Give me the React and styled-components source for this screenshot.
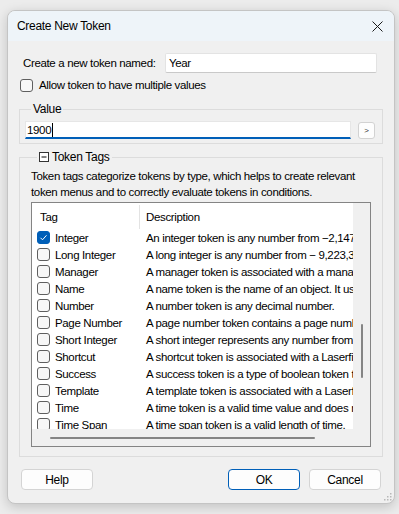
import React from "react";
import styled, { createGlobalStyle } from "styled-components";

const FONT = `"Liberation Sans", Arial, sans-serif`;

const Global = createGlobalStyle`
  html, body { margin: 0; padding: 0; }
  body {
    background: #ececec;
    font-family: ${FONT};
    font-size: 11.5px;
    letter-spacing: -0.35px;
    color: #000;
  }
  * { box-sizing: border-box; }
`;

const Page = styled.div`
  width: 399px;
  height: 514px;
  padding: 10px 0 0 7px;
`;

const Window = styled.div`
  width: 388px;
  height: 494px;
  background: #f0f0f0;
  border: 1px solid #c4c4c4;
  border-radius: 8px;
  box-shadow: 0 3px 12px rgba(0, 0, 0, 0.18);
  overflow: hidden;
  display: flex;
  flex-direction: column;
  position: relative;
`;

const TitleBar = styled.div`
  height: 30px;
  flex: none;
  background: #eef4f9;
  display: flex;
  align-items: center;
  justify-content: space-between;
  padding: 0 9px 0 9px;
  font-size: 12px;
  letter-spacing: -0.3px;
`;

const CloseBtn = styled.div`
  width: 14px;
  height: 14px;
  display: flex;
  align-items: center;
  justify-content: center;
  margin-right: 1px;
`;

const Body = styled.div`
  flex: 1;
  display: flex;
  flex-direction: column;
  padding: 12px 11px 12px 11px;
`;

const NameRow = styled.div`
  display: flex;
  align-items: center;
  height: 20px;
  padding-left: 4px;
`;

const Label = styled.span`
  width: 142px;
  flex: none;
`;

const TextBox = styled.div`
  width: 212px;
  height: 20px;
  background: #fff;
  border: 1px solid #e3e3e3;
  border-bottom-color: #c9c9c9;
  border-radius: 2px;
  display: flex;
  align-items: center;
  padding-left: 3px;
`;

const CheckRow = styled.label`
  display: flex;
  align-items: center;
  gap: 6px;
  height: 16px;
  margin-top: 4px;
  padding-left: 1px;
`;

const Box = styled.span`
  width: 13px;
  height: 13px;
  flex: none;
  border-radius: 3px;
  border: 1px solid ${(p) => (p.$checked ? "#005fb8" : "#5f5f5f")};
  background: ${(p) => (p.$checked ? "#005fb8" : "#f7f7f7")};
  display: flex;
  align-items: center;
  justify-content: center;
`;

const Group = styled.fieldset`
  margin: ${(p) => p.$mt}px 0 0 0;
  padding: ${(p) => p.$pad};
  border: 1px solid #dcdcdc;
  border-radius: 0;
  min-width: 0;
`;

const Legend = styled.legend`
  margin-left: 6px;
  padding: 0 2px;
  height: 16px;
  line-height: 16px;
  font-size: 12px;
  letter-spacing: -0.3px;
  display: flex;
  align-items: center;
  gap: 3px;
`;

const ValueRow = styled.div`
  display: flex;
  align-items: center;
  gap: 7px;
`;

const ValueBox = styled.div`
  width: 326px;
  height: 18px;
  background: #fff;
  border: 1px solid #e6e6e6;
  border-bottom: 2px solid #005fb8;
  display: flex;
  align-items: center;
  padding-left: 1px;
`;

const Caret = styled.span`
  width: 1px;
  height: 14px;
  background: #000;
  margin-left: 1px;
`;

const SmallBtn = styled.div`
  width: 17px;
  height: 17px;
  background: #fdfdfd;
  border: 1px solid #d2d2d2;
  border-radius: 3px;
  display: flex;
  align-items: center;
  justify-content: center;
  font-size: 8px;
  color: #333;
`;

const Desc = styled.p`
  margin: 3px 0 2px 0;
  line-height: 16px;
`;

const ListBox = styled.div`
  height: 245px;
  border: 1px solid #848484;
  display: grid;
  grid-template-columns: 1fr 17px;
  grid-template-rows: 1fr 17px;
  background: #f0f0f0;
`;

const Viewport = styled.div`
  background: #fff;
  overflow: hidden;
  white-space: nowrap;
`;

const Row = styled.div`
  display: grid;
  grid-template-columns: 107px auto;
  height: ${(p) => (p.$header ? 26 : 17)}px;
  align-items: center;
`;

const HeadCell = styled.div`
  height: 24px;
  display: flex;
  align-items: center;
  padding-left: ${(p) => p.$pl}px;
  border-left: ${(p) => (p.$div ? "1px solid #e3e3e3" : "none")};
  margin-top: 1px;
`;

const TagCell = styled.div`
  display: flex;
  align-items: center;
  gap: 5px;
  padding-left: 5px;
`;

const DescCell = styled.div`
  padding-left: 7px;
`;

const VScroll = styled.div`
  background: #f0f0f0;
  display: flex;
  justify-content: center;
`;

const VThumb = styled.div`
  width: 2px;
  height: 54px;
  margin-top: 121px;
  margin-left: 1px;
  background: #858585;
  border-radius: 1px;
`;

const HScroll = styled.div`
  background: #f0f0f0;
  display: flex;
  align-items: center;
`;

const HThumb = styled.div`
  height: 2px;
  width: 265px;
  margin-left: 18px;
  margin-top: 1px;
  background: #858585;
  border-radius: 1px;
`;

const Corner = styled.div`
  background: #f0f0f0;
`;

const Footer = styled.div`
  margin-top: 12px;
  display: flex;
  align-items: center;
  padding-left: 2px;
  padding-right: 2px;
`;

const Button = styled.div`
  width: 73px;
  height: 21px;
  background: #fdfdfd;
  border: 1px solid ${(p) => (p.$primary ? "#005fb8" : "#d4d4d4")};
  border-radius: 4px;
  display: flex;
  align-items: center;
  justify-content: center;
  font-size: 12px;
  letter-spacing: -0.3px;
  margin-left: ${(p) => p.$ml || 0}px;
`;

const Grip = styled.svg`
  position: absolute;
  right: 2px;
  bottom: 2px;
`;

const rows = [
  { tag: "Integer", checked: true, desc: "An integer token is any number from \u22122,147,483,648 to 2,147,483,647." },
  { tag: "Long Integer", desc: "A long integer is any number from \u2212 9,223,372,036,854,775,808 to 9,223,372,036,854,775,807." },
  { tag: "Manager", desc: "A manager token is associated with a manager object." },
  { tag: "Name", desc: "A name token is the name of an object. It uses the naming rules." },
  { tag: "Number", desc: "A number token is any decimal number." },
  { tag: "Page Number", desc: "A page number token contains a page number." },
  { tag: "Short Integer", desc: "A short integer represents any number from -32,768 to 32,767." },
  { tag: "Shortcut", desc: "A shortcut token is associated with a Laserfiche shortcut." },
  { tag: "Success", desc: "A success token is a type of boolean token that indicates success." },
  { tag: "Template", desc: "A template token is associated with a Laserfiche template." },
  { tag: "Time", desc: "A time token is a valid time value and does not include a date." },
  { tag: "Time Span", desc: "A time span token is a valid length of time." },
];

const Check = ({ checked }) => (
  <Box $checked={checked}>
    {checked && (
      <svg width="9" height="9" viewBox="0 0 9 9">
        <path d="M1.5 4.8 L3.5 6.8 L7.5 2.3" fill="none" stroke="#fff" strokeWidth="1" />
      </svg>
    )}
  </Box>
);

export default function App() {
  return (
    <Page>
      <Global />
      <Window>
        <TitleBar>
          <span>Create New Token</span>
          <CloseBtn>
            <svg width="11" height="11" viewBox="0 0 11 11">
              <path d="M0.5 0.5 L10.5 10.5 M10.5 0.5 L0.5 10.5" stroke="#1a1a1a" strokeWidth="1" />
            </svg>
          </CloseBtn>
        </TitleBar>
        <Body>
          <NameRow>
            <Label>Create a new token named:</Label>
            <TextBox>Year</TextBox>
          </NameRow>
          <CheckRow>
            <Check />
            Allow token to have multiple values
          </CheckRow>
          <Group $mt={8} $pad="4px 7px 4px 5px">
            <Legend>Value</Legend>
            <ValueRow>
              <ValueBox>
                1900
                <Caret />
              </ValueBox>
              <SmallBtn>&gt;</SmallBtn>
            </ValueRow>
          </Group>
          <Group $mt={5} $pad="0 11px 9px 11px">
            <Legend>
              <svg width="10" height="10" viewBox="0 0 10 10">
                <rect x="0.5" y="0.5" width="9" height="9" fill="#fff" stroke="#333" />
                <path d="M2.5 5 H7.5" stroke="#000" strokeWidth="1" />
              </svg>
              Token Tags
            </Legend>
            <Desc>
              Token tags categorize tokens by type, which helps to create relevant token menus and to correctly evaluate tokens in conditions.
            </Desc>
            <ListBox>
              <Viewport>
                <Row $header>
                  <HeadCell $pl={8}>Tag</HeadCell>
                  <HeadCell $pl={6} $div>Description</HeadCell>
                </Row>
                {rows.map((r) => (
                  <Row key={r.tag}>
                    <TagCell>
                      <Check checked={r.checked} />
                      {r.tag}
                    </TagCell>
                    <DescCell>{r.desc}</DescCell>
                  </Row>
                ))}
              </Viewport>
              <VScroll>
                <VThumb />
              </VScroll>
              <HScroll>
                <HThumb />
              </HScroll>
              <Corner />
            </ListBox>
          </Group>
          <Footer>
            <Button>Help</Button>
            <Button $primary $ml={135}>OK</Button>
            <Button $ml={9}>Cancel</Button>
          </Footer>
        </Body>
        <Grip width="8" height="8" viewBox="0 0 8 8">
          <g fill="#b8b8b8">
            <rect x="6" y="0" width="1.5" height="1.5" />
            <rect x="3" y="3" width="1.5" height="1.5" />
            <rect x="6" y="3" width="1.5" height="1.5" />
            <rect x="0" y="6" width="1.5" height="1.5" />
            <rect x="3" y="6" width="1.5" height="1.5" />
            <rect x="6" y="6" width="1.5" height="1.5" />
          </g>
        </Grip>
      </Window>
    </Page>
  );
}
